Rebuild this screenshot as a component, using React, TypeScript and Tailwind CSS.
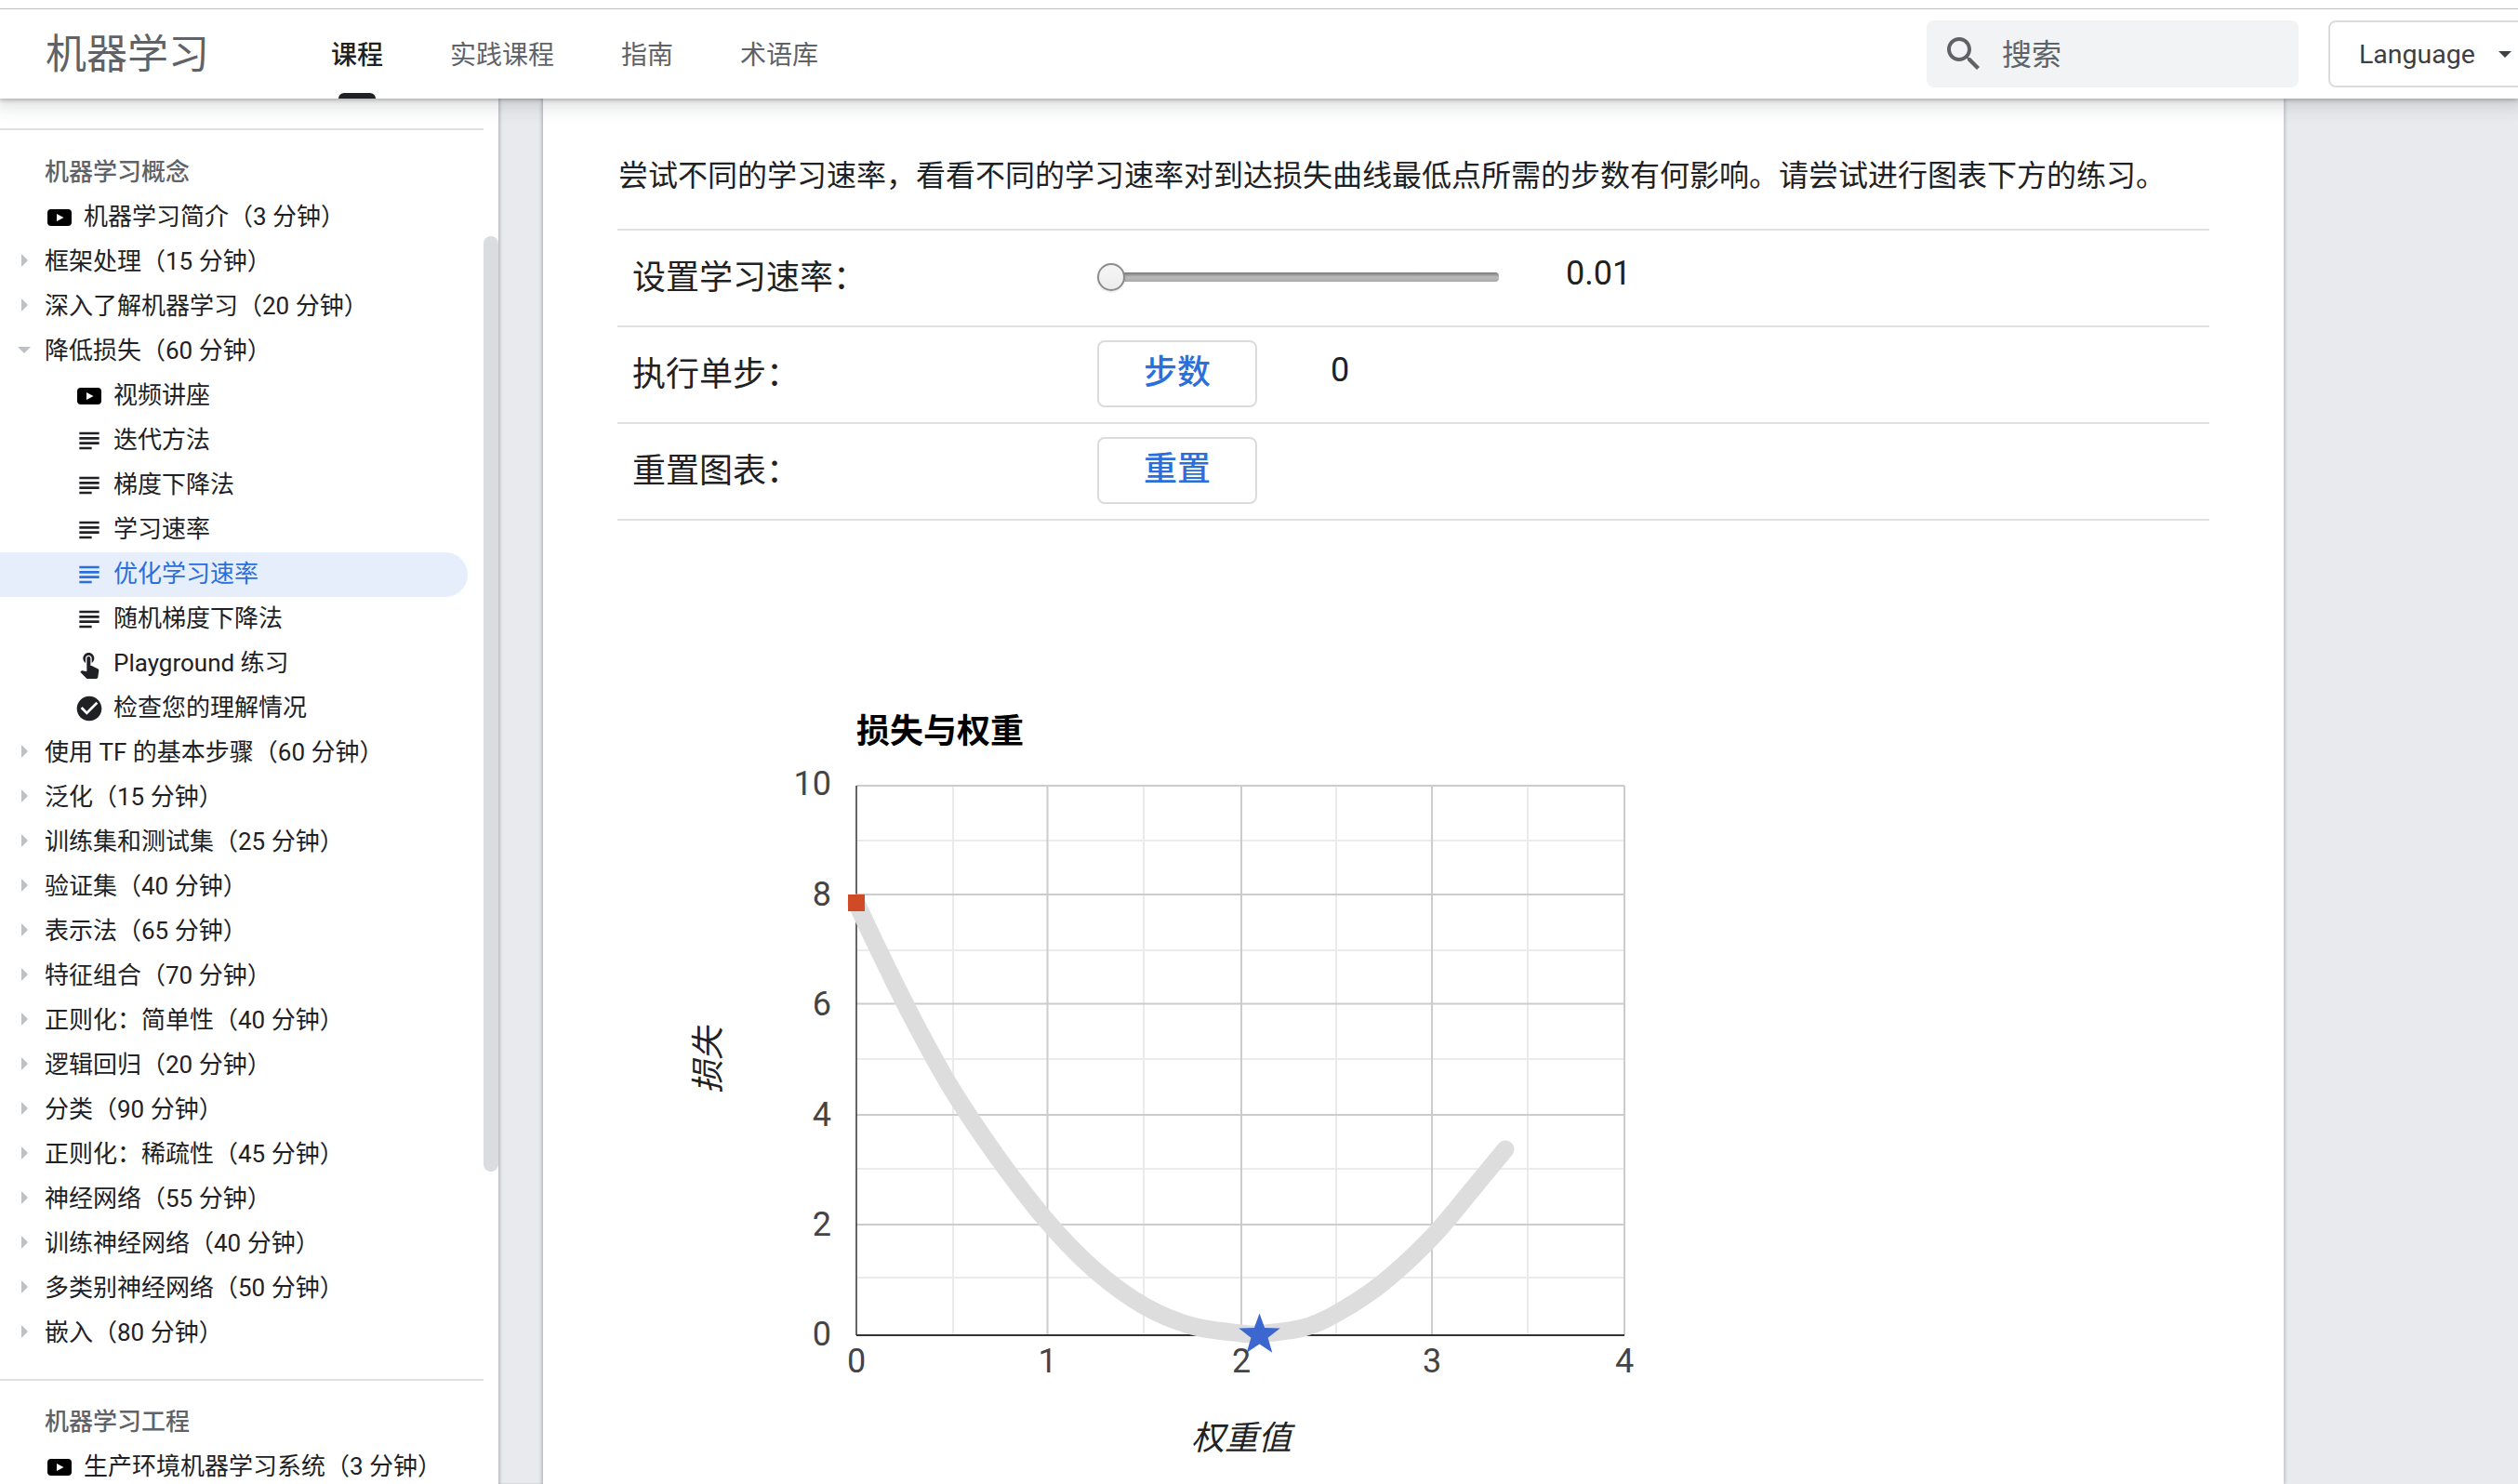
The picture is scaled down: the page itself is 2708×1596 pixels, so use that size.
import React from 'react';

type Row = {
  text: string;
  kind?: 'header' | 'video' | 'doc' | 'touch' | 'check' | 'closed' | 'open';
  level?: number;
  active?: boolean;
};

const topRows: Row[] = [
  { text: '机器学习概念', kind: 'header' },
  { text: '机器学习简介（3 分钟）', kind: 'video' },
  { text: '框架处理（15 分钟）', kind: 'closed' },
  { text: '深入了解机器学习（20 分钟）', kind: 'closed' },
  { text: '降低损失（60 分钟）', kind: 'open' },
  { text: '视频讲座', kind: 'video', level: 1 },
  { text: '迭代方法', kind: 'doc', level: 1 },
  { text: '梯度下降法', kind: 'doc', level: 1 },
  { text: '学习速率', kind: 'doc', level: 1 },
  { text: '优化学习速率', kind: 'doc', level: 1, active: true },
  { text: '随机梯度下降法', kind: 'doc', level: 1 },
  { text: 'Playground 练习', kind: 'touch', level: 1 },
  { text: '检查您的理解情况', kind: 'check', level: 1 },
  { text: '使用 TF 的基本步骤（60 分钟）', kind: 'closed' },
  { text: '泛化（15 分钟）', kind: 'closed' },
  { text: '训练集和测试集（25 分钟）', kind: 'closed' },
  { text: '验证集（40 分钟）', kind: 'closed' },
  { text: '表示法（65 分钟）', kind: 'closed' },
  { text: '特征组合（70 分钟）', kind: 'closed' },
  { text: '正则化：简单性（40 分钟）', kind: 'closed' },
  { text: '逻辑回归（20 分钟）', kind: 'closed' },
  { text: '分类（90 分钟）', kind: 'closed' },
  { text: '正则化：稀疏性（45 分钟）', kind: 'closed' },
  { text: '神经网络（55 分钟）', kind: 'closed' },
  { text: '训练神经网络（40 分钟）', kind: 'closed' },
  { text: '多类别神经网络（50 分钟）', kind: 'closed' },
  { text: '嵌入（80 分钟）', kind: 'closed' },
];

const bottomRows: Row[] = [
  { text: '机器学习工程', kind: 'header' },
  { text: '生产环境机器学习系统（3 分钟）', kind: 'video' },
];

const RowIcon = ({ kind }: { kind: Row['kind'] }) => {
  if (kind === 'video') {
    return (
      <svg viewBox="0 0 32 32" className="w-8 h-8 shrink-0 mr-[10px]">
        <rect x="3" y="7" width="26" height="18" rx="4" fill="#000" />
        <path d="M13 12l7.5 4-7.5 4z" fill="#fff" />
      </svg>
    );
  }
  const paths: Record<string, string> = {
    doc: 'M14 17H4v2h10v-2zm6-8H4v2h16V9zM4 15h16v-2H4v2zM4 5v2h16V5H4z',
    touch:
      'M9 11.24V7.5C9 6.12 10.12 5 11.5 5S14 6.12 14 7.5v3.74c1.21-.81 2-2.18 2-3.74C16 5.01 13.99 3 11.5 3S7 5.01 7 7.5c0 1.56.79 2.93 2 3.74zm9.84 4.63l-4.54-2.26c-.17-.07-.35-.11-.54-.11H13v-6c0-.83-.67-1.5-1.5-1.5S10 6.67 10 7.5v10.74l-3.43-.72c-.08-.01-.15-.03-.24-.03-.31 0-.59.13-.79.33l-.79.8 4.94 4.94c.27.27.65.44 1.06.44h6.79c.75 0 1.33-.55 1.44-1.28l.75-5.27c.01-.07.02-.14.02-.2 0-.62-.38-1.16-.91-1.38z',
    check: 'M12 2C6.48 2 2 6.48 2 12s4.48 10 10 10 10-4.48 10-10S17.52 2 12 2zm-2 15l-5-5 1.41-1.41L10 14.17l7.59-7.59L19 8l-9 9z',
  };
  return (
    <svg viewBox="0 0 24 24" className="w-8 h-8 shrink-0 mr-[10px]" fill="currentColor">
      <path d={paths[kind as string]} />
    </svg>
  );
};

const SideRow = ({ row }: { row: Row }) => {
  const { kind, level = 0, active, text } = row;
  const hasIcon = kind === 'video' || kind === 'doc' || kind === 'touch' || kind === 'check';
  const tone = active
    ? 'bg-[#e6eefb] text-[#2a6fdb] rounded-r-full w-[503px]'
    : kind === 'header'
      ? 'text-[#5f6368] font-medium'
      : 'text-[#202124]';
  const indent = level === 1 ? 'pl-20' : 'pl-12';

  return (
    <div className={`relative flex items-center h-12 text-[26px] whitespace-nowrap ${indent} ${tone}`}>
      {kind === 'closed' && (
        <svg viewBox="0 0 7 14" className="absolute left-[23px] top-[15px] w-[7px] h-[14px]">
          <path d="M0 0l7 7-7 7z" fill="#bdc1c6" />
        </svg>
      )}
      {kind === 'open' && (
        <svg viewBox="0 0 14 7" className="absolute left-[19px] top-[19px] w-[14px] h-[7px]">
          <path d="M0 0h14l-7 7z" fill="#bdc1c6" />
        </svg>
      )}
      {hasIcon && <RowIcon kind={kind} />}
      <span className="-mt-0.5">{text}</span>
    </div>
  );
};

const Sidebar = () => (
  <aside className="relative w-[536px] shrink-0 h-full bg-white flex overflow-hidden">
    <div className="w-[520px] shrink-0 pt-8">
      <div className="h-0.5 bg-[#e0e0e0]" />
      <div className="mt-[22px]">
        {topRows.map((r) => (
          <SideRow key={r.text} row={r} />
        ))}
      </div>
      <div className="h-0.5 bg-[#e0e0e0] mt-[25px] mb-[21px]" />
      {bottomRows.map((r) => (
        <SideRow key={r.text} row={r} />
      ))}
    </div>
    <div className="w-4 shrink-0 mt-[148px] h-[1006px] bg-[#dadce0] rounded-t-lg rounded-b-lg" />
  </aside>
);

// sampled from the reference curve
const curve: [number, number][] = [
  [921, 971], [945.5, 1023], [980.6, 1093.6], [1022.7, 1169.8], [1071.8, 1243.2], [1126.5, 1313.9],
  [1177, 1365.6], [1231, 1404.8], [1282.3, 1426], [1334.9, 1434], [1354.5, 1434.5], [1401.5, 1428],
  [1436.6, 1413], [1485.7, 1380.8], [1540.4, 1330.2], [1583.9, 1278.6], [1619, 1236],
];

const smoothPath = (pts: [number, number][]) => {
  let d = `M${pts[0][0]} ${pts[0][1]}`;
  for (let i = 0; i < pts.length - 1; i++) {
    const p0 = pts[Math.max(i - 1, 0)];
    const p1 = pts[i];
    const p2 = pts[i + 1];
    const p3 = pts[Math.min(i + 2, pts.length - 1)];
    const c1x = p1[0] + (p2[0] - p0[0]) / 6;
    const c1y = p1[1] + (p2[1] - p0[1]) / 6;
    const c2x = p2[0] - (p3[0] - p1[0]) / 6;
    const c2y = p2[1] - (p3[1] - p1[1]) / 6;
    d += `C${c1x} ${c1y} ${c2x} ${c2y} ${p2[0]} ${p2[1]}`;
  }
  return d;
};

const xMajor = [1126.5, 1335, 1540];
const xMinor = [1025, 1230, 1437, 1643];
const yMajor = [962, 1079.5, 1199, 1317];
const yMinor = [904, 1022, 1139, 1257, 1374];
const yLabels: [string, number][] = [['10', 843], ['8', 962], ['6', 1080], ['4', 1199], ['2', 1317], ['0', 1435]];
const xLabels: [string, number][] = [['0', 921], ['1', 1126.5], ['2', 1335], ['3', 1540], ['4', 1747]];

const Chart = () => (
  <svg viewBox="700 740 1100 856" className="block w-[1100px] h-[856px] ml-9 mt-[180px] shrink-0">
    {xMinor.map((x) => (
      <line key={x} x1={x} x2={x} y1={845} y2={1435} stroke="#ebebeb" strokeWidth={2} />
    ))}
    {yMinor.map((y) => (
      <line key={y} x1={921} x2={1747} y1={y} y2={y} stroke="#ebebeb" strokeWidth={2} />
    ))}
    {xMajor.map((x) => (
      <line key={x} x1={x} x2={x} y1={845} y2={1435} stroke="#cccccc" strokeWidth={2} />
    ))}
    {yMajor.map((y) => (
      <line key={y} x1={921} x2={1747} y1={y} y2={y} stroke="#cccccc" strokeWidth={2} />
    ))}
    <line x1={921} x2={1747} y1={845} y2={845} stroke="#cccccc" strokeWidth={2} />
    <line x1={1747} x2={1747} y1={845} y2={1436} stroke="#cccccc" strokeWidth={2} />
    <line x1={921} x2={921} y1={845} y2={1436} stroke="#333" strokeWidth={1.5} />
    <line x1={921} x2={1747} y1={1436} y2={1436} stroke="#333" strokeWidth={2} />
    <path d={smoothPath(curve)} fill="none" stroke="#dddddd" strokeWidth={19} strokeLinecap="round" />
    <rect x={912} y={962} width={18} height={18} fill="#cf4a25" />
    <path
      d="M1354.5 1412.5l5.6 15.6 16.6.5-13.1 10.2 4.7 15.9-13.8-9.3-13.8 9.3 4.7-15.9-13.1-10.2 16.6-.5z"
      fill="#3c67cf"
    />
    <g fill="#444444" fontSize="36">
      {yLabels.map(([t, y]) => (
        <text key={t} x={894} y={y + 12} textAnchor="end">{t}</text>
      ))}
      {xLabels.map(([t, x]) => (
        <text key={t} x={x} y={1476} textAnchor="middle">{t}</text>
      ))}
    </g>
    <text x={921} y={799} fontSize="36" fontWeight="700" fill="#000">损失与权重</text>
    <text x={1335} y={1559} fontSize="36" fontStyle="italic" fill="#222" textAnchor="middle">权重值</text>
    <text x={0} y={0} fontSize="36" fontStyle="italic" fill="#222" textAnchor="middle" transform="translate(774 1140) rotate(-90)">损失</text>
  </svg>
);

const ActionButton = ({ children }: { children: React.ReactNode }) => (
  <button className="w-[172px] h-[72px] -mt-0.5 border-2 border-[#dadce0] rounded-lg bg-white text-[#2a6fdb] text-[36px] font-medium flex items-center justify-center">
    <span className="-mt-0.5">{children}</span>
  </button>
);

const ControlRow = ({ label, children }: { label: string; children?: React.ReactNode }) => (
  <div className="grid grid-cols-[516px_1fr] h-[104px] items-center border-b-2 border-[#e0e0e0] text-[#202124]">
    <div className="pl-4 text-[36px]">{label}</div>
    <div className="flex items-center">{children}</div>
  </div>
);

const Article = () => (
  <main className="w-[1872px] shrink-0 h-full bg-white pl-20 pr-20 overflow-hidden shadow-[2px_0_3px_rgba(60,64,67,0.2)]">
    <p className="h-[140px] pt-[61px] text-[32px] leading-[44px] text-[#202124] whitespace-nowrap ml-px">
      尝试不同的学习速率，看看不同的学习速率对到达损失曲线最低点所需的步数有何影响。请尝试进行图表下方的练习。
    </p>
    <div className="border-t-2 border-[#e0e0e0]">
      <ControlRow label="设置学习速率：">
        <div className="relative w-[431px] h-[10px] ml-px -mt-0.5 rounded-sm bg-linear-to-b from-[#777777] via-[#bbbbbb] to-[#a8a8a8]">
          <div className="absolute -left-px -top-[10px] w-[30px] h-[30px] rounded-full border-2 border-[#8c8c8c] bg-linear-to-b from-[#f6f6f6] to-[#ececec] shadow-sm" />
        </div>
        <span className="ml-[72px] text-[36px] -mt-[11px]">0.01</span>
      </ControlRow>
      <ControlRow label="执行单步：">
        <ActionButton>步数</ActionButton>
        <span className="ml-[79px] text-[36px] -mt-[11px]">0</span>
      </ControlRow>
      <ControlRow label="重置图表：">
        <ActionButton>重置</ActionButton>
      </ControlRow>
    </div>
    <Chart />
  </main>
);

const Header = () => (
  <header className="relative z-10 shrink-0 bg-white shadow-[0_2px_4px_0_rgba(60,64,67,0.3),0_4px_16px_6px_rgba(60,64,67,0.15)]">
    <div className="h-[10px] border-b border-[#bdbdbd]" />
    <div className="h-24 flex items-center pl-[49px]">
      <div className="text-[44px] text-[#5f6368] whitespace-nowrap mt-0.5">机器学习</div>
      <nav className="flex h-full gap-[72px] ml-[131px] text-[28px] text-[#5f6368] whitespace-nowrap">
        {['课程', '实践课程', '指南', '术语库'].map((t, i) => (
          <div key={t} className={`relative flex items-center pt-1 ${i === 0 ? 'text-[#202124] font-medium' : ''}`}>
            {t}
            {i === 0 && <div className="absolute bottom-0 left-2 w-10 h-1.5 bg-[#202124] rounded-t-md" />}
          </div>
        ))}
      </nav>
      <div className="flex-1" />
      <div className="w-[400px] h-[72px] rounded-lg bg-[#f1f3f4] flex items-center pl-4 text-[#5f6368]">
        <svg viewBox="0 0 24 24" className="w-12 h-12" fill="currentColor">
          <path d="M15.5 14h-.79l-.28-.27C15.41 12.59 16 11.11 16 9.5 16 5.91 13.09 3 9.5 3S3 5.91 3 9.5 5.91 16 9.5 16c1.61 0 3.09-.59 4.23-1.57l.27.28v.79l5 4.99L20.49 19l-4.99-5zm-6 0C7.01 14 5 11.99 5 9.5S7.01 5 9.5 5 14 7.01 14 9.5 11.99 14 9.5 14z" />
        </svg>
        <span className="ml-[17px] text-[32px] mt-0.5">搜索</span>
      </div>
      <div className="w-[220px] h-[72px] ml-8 -mr-4 shrink-0 border-2 border-[#dadce0] rounded-lg flex items-center pl-[31px] text-[28.5px] text-[#3c4043]">
        <span className="mt-0.5">Language</span>
        <svg viewBox="0 0 14 7" className="w-[14px] h-[7px] ml-[25px]">
          <path d="M0 0h14l-7 7z" fill="#3c4043" />
        </svg>
      </div>
    </div>
  </header>
);

export default function App() {
  return (
    <div className="w-[2708px] h-[1596px] flex flex-col overflow-hidden bg-[#e8eaed] font-[Roboto,'Noto_Sans_CJK_SC',sans-serif]">
      <Header />
      <div className="flex-1 flex min-h-0">
        <Sidebar />
        <div className="w-[48px] shrink-0 shadow-[inset_3px_0_3px_-1px_rgba(60,64,67,0.25),inset_-3px_0_3px_-1px_rgba(60,64,67,0.25)]" />
        <Article />
      </div>
    </div>
  );
}
